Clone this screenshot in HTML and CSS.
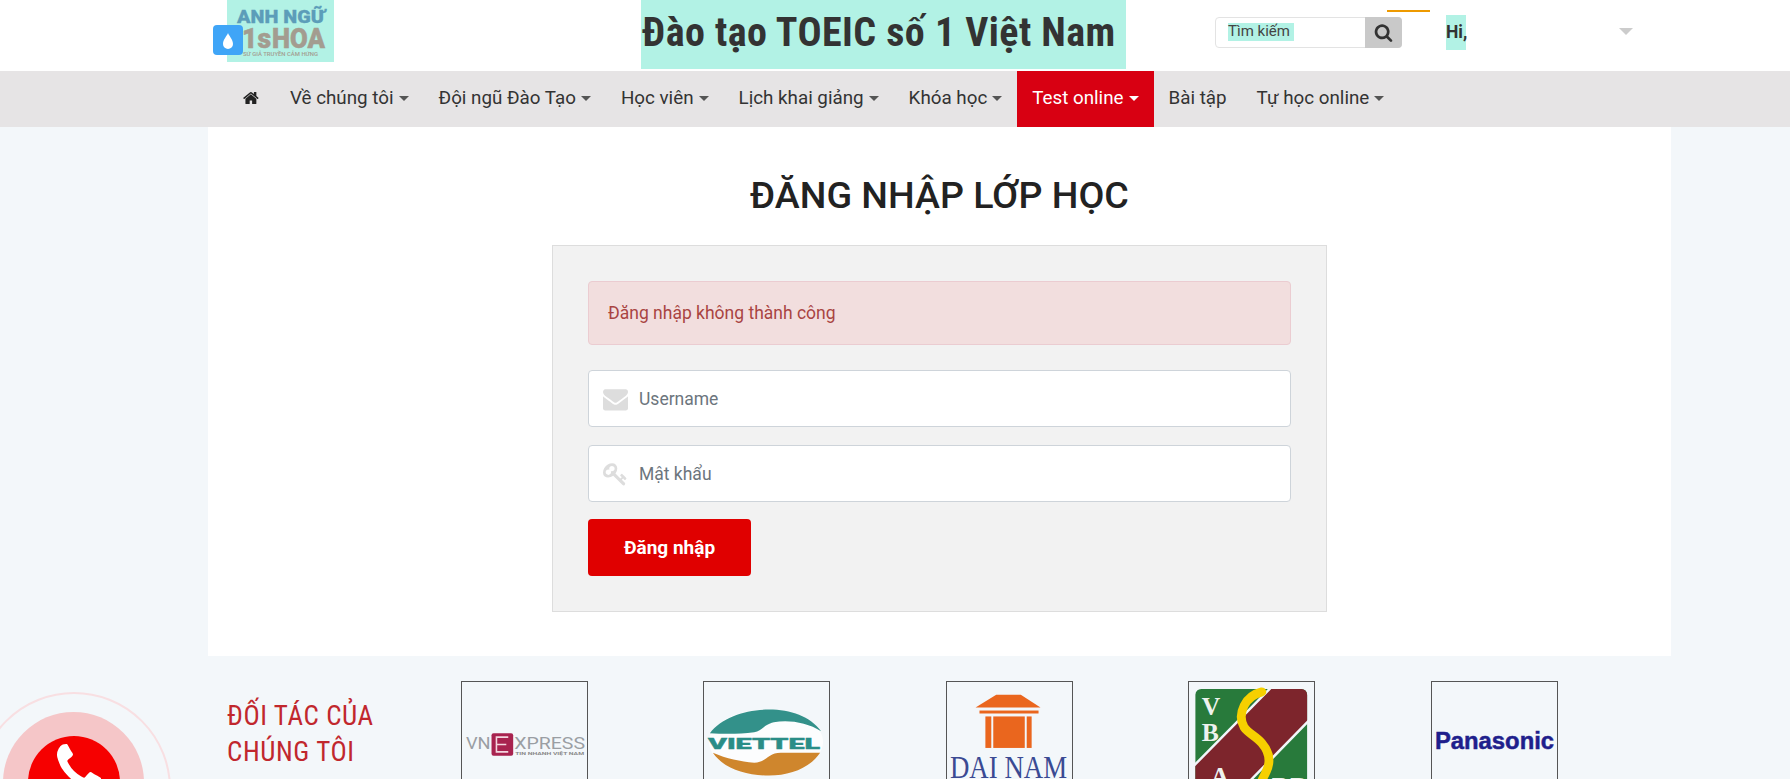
FILE: index.html
```html
<!DOCTYPE html>
<html lang="vi">
<head>
<meta charset="utf-8">
<title>Đăng nhập lớp học</title>
<link rel="stylesheet" href="styles.css">
</head>
<body>
<header class="topbar">
  <a class="logo">
    <svg class="logo-art" viewBox="0 0 107 62" width="107" height="62">
      <text x="10" y="23" class="logo-a" textLength="88" lengthAdjust="spacingAndGlyphs">ANH NGỮ</text>
      <text x="15" y="47.500" class="logo-b" textLength="29" lengthAdjust="spacingAndGlyphs">1s</text>
      <text x="45" y="47.500" class="logo-b" textLength="53" lengthAdjust="spacingAndGlyphs">HOA</text>
      <text x="16" y="56" class="logo-c" textLength="75" lengthAdjust="spacingAndGlyphs">SỨ GIẢ TRUYỀN CẢM HỨNG</text>
    </svg>
    <span class="drop-badge">
      <svg viewBox="0 0 30 30" width="30" height="30"><path d="M15 8c1 3 5 6.500 5 11a5 5 0 0 1-10 0C10 14.500 14 11 15 8z" fill="#fff"/></svg>
    </span>
  </a>
  <div class="slogan">Đào tạo TOEIC số 1 Việt Nam</div>
  <form class="search">
    <span class="search-field"><span class="search-label">Tìm kiếm</span></span>
    <span class="search-btn">
      <svg viewBox="0 0 1792 1792" width="19" height="19"><path fill="#333" d="M1216 832q0-185-131.500-316.500t-316.500-131.500-316.500 131.500-131.500 316.500 131.500 316.500 316.500 131.500 316.500-131.500 131.500-316.500zm512 832q0 52-38 90t-90 38q-54 0-90-38l-343-342q-179 124-399 124-143 0-273.500-55.500t-225-150-150-225-55.500-273.500 55.500-273.500 150-225 225-150 273.500-55.500 273.500 55.500 225 150 150 225 55.500 273.500q0 220-124 399l343 343q37 37 37 90z"/></svg>
    </span>
    <span class="orange-line"></span>
  </form>
  <div class="hi">Hi,</div>
  <span class="user-caret"></span>
</header>

<nav class="menu">
  <a class="item home">
    <svg viewBox="0 0 1792 1792" width="17" height="18"><path fill="#222" d="M1408 992v480q0 26-19 45t-45 19h-384v-384h-256v384h-384q-26 0-45-19t-19-45v-480q0-1 .5-3t.5-3l575-474 575 474q1 2 1 6zm223-69l-62 74q-8 9-21 11h-3q-13 0-21-7l-692-577-692 577q-12 8-24 7-13-2-21-11l-62-74q-8-10-7-23.500t11-21.500l719-599q32-26 76-26t76 26l244 204v-195q0-14 9-23t23-9h192q14 0 23 9t9 23v408l219 182q10 8 11 21.500t-7 23.500z"/></svg>
  </a>
  <a class="item">Về chúng tôi<i class="caret"></i></a>
  <a class="item">Đội ngũ Đào Tạo<i class="caret"></i></a>
  <a class="item">Học viên<i class="caret"></i></a>
  <a class="item">Lịch khai giảng<i class="caret"></i></a>
  <a class="item">Khóa học<i class="caret"></i></a>
  <a class="item active">Test online<i class="caret"></i></a>
  <a class="item">Bài tập</a>
  <a class="item">Tự học online<i class="caret"></i></a>
</nav>

<main class="sheet">
  <h1 class="sheet-title">ĐĂNG NHẬP LỚP HỌC</h1>
  <form class="login">
    <div class="alert">Đăng nhập không thành công</div>
    <div class="field">
      <svg class="field-icon" viewBox="0 0 1792 1792" width="25" height="27" preserveAspectRatio="none"><path fill="#ddd" d="M1792 710v794q0 66-47 113t-113 47h-1472q-66 0-113-47t-47-113v-794q44 49 101 87 362 246 497 345 57 42 92.500 65.500t94.500 48 110 24.500h2q51 0 110-24.500t94.500-48 92.500-65.500q170-123 498-345 57-39 100-87zm0-294q0 79-49 151t-122 123q-376 261-468 325-10 7-42.500 30.500t-54 38-52 32.500-57.500 27-50 9h-2q-23 0-50-9t-57.500-27-52-32.500-54-38-42.500-30.500q-91-64-262-182.500t-205-142.500q-62-42-117-115.500t-55-136.500q0-78 41.500-130t118.500-52h1472q65 0 112.500 47t47.500 113z"/></svg>
      <input class="input" type="text" placeholder="Username">
    </div>
    <div class="field">
      <svg class="field-icon" viewBox="0 0 1792 1792" width="25" height="25"><path fill="#ddd" d="M832 512q0-80-56-136t-136-56-136 56-56 136q0 42 19 83-41-19-83-19-80 0-136 56t-56 136 56 136 136 56 136-56 56-136q0-42-19-83 41 19 83 19 80 0 136-56t56-136zm851 704q0 17-49 66t-66 49q-9 0-28.500-16t-36.500-33-38.500-40-24.500-26l-96 96 220 220q28 28 28 68 0 42-39 81t-81 39q-40 0-68-28l-671-671q-176 131-365 131-163 0-265.500-102.500t-102.500-265.500q0-160 95-313t248-248 313-95q163 0 265.500 102.500t102.500 265.500q0 189-131 365l355 355 96-96q-3-3-26-24.500t-40-38.500-33-36.500-16-28.500q0-17 49-66t66-49q13 0 23 10 6 6 46 44.500t82 79.500 86.500 86 73 78 28.500 41z"/></svg>
      <input class="input" type="password" placeholder="Mật khẩu">
    </div>
    <button class="submit" type="button">Đăng nhập</button>
  </form>
</main>

<section class="partners">
  <h2 class="partners-title">ĐỐI TÁC CỦA<br>CHÚNG TÔI</h2>
  <div class="partner">
    <svg viewBox="0 0 127 127" width="125" height="125">
      <text x="4" y="68" class="vn-text" textLength="25" lengthAdjust="spacingAndGlyphs">VN</text>
      <rect x="30" y="52" width="22" height="23" rx="2" fill="#a8234f"/>
      <path d="M47 56H35v15h12M35 63.500h10" fill="none" stroke="#f3d6df" stroke-width="1.600"/>
      <text x="53" y="68" class="vn-text" textLength="72" lengthAdjust="spacingAndGlyphs">XPRESS</text>
      <text x="54" y="74.500" class="vn-small" textLength="70" lengthAdjust="spacingAndGlyphs">TIN NHANH VIỆT NAM</text>
    </svg>
  </div>
  <div class="partner">
    <svg viewBox="0 0 127 127" width="125" height="125">
      <ellipse cx="63" cy="61" rx="58" ry="33" fill="#fff" opacity=".7"/>
      <path d="M6 52C18 36 42 28 66 28c22 0 42 7 53 22-14-9-34-12-48-9-10 2-12 9-20 10-15 2-30 2-45 1z" fill="#33918a"/>
      <path d="M9 72c14 6 28 9 42 10 12 0 14-10 27-10h40C108 87 88 95 66 95 42 95 20 88 9 72z" fill="#cf862d"/>
      <text x="4" y="68" class="vt-text" textLength="114" lengthAdjust="spacingAndGlyphs">VIETTEL</text>
    </svg>
  </div>
  <div class="partner">
    <svg viewBox="0 0 127 127" width="125" height="125">
      <path d="M29 26L50 13h25l20 13z" fill="#ea661e"/>
      <rect x="33" y="29" width="60" height="3" fill="#ea661e"/>
      <rect x="39" y="35" width="6" height="32" fill="#ea661e"/>
      <rect x="47" y="35" width="32" height="32" fill="#ea661e"/>
      <rect x="81" y="35" width="5" height="32" fill="#ea661e"/>
      <text x="3" y="98" class="dn-text" textLength="119" lengthAdjust="spacingAndGlyphs">DAI NAM</text>
    </svg>
  </div>
  <div class="partner">
    <svg viewBox="0 0 127 127" width="125" height="125">
      <rect x="6.500" y="7" width="113.500" height="118" rx="6" fill="#287a3b"/>
      <path d="M6.500 84L83 7h31a6 6 0 0 1 6 6v27L38 125H6.500z" fill="#7d252c"/>
      <path d="M5 85L83 6M36 127L122 39" stroke="#f3f6fa" stroke-width="2.500"/>
      <path d="M74 10C66 12 60 16 56 24c-4 8-4 15 0 22 4 6 12 9 18 16 6 7 8 14 7 21-1 8-6 13-8 20" fill="none" stroke="#f6d000" stroke-width="9" stroke-linecap="round"/>
      <text x="13" y="34" class="vb-text">V</text>
      <text x="13" y="60" class="vb-text">B</text>
      <text x="22" y="105" class="vb-text">A</text>
      <text x="84" y="115" class="vb-text">RD</text>
    </svg>
  </div>
  <div class="partner">
    <svg viewBox="0 0 127 127" width="125" height="125">
      <text x="3" y="68" class="pa-text" textLength="121" lengthAdjust="spacingAndGlyphs">Panasonic</text>
    </svg>
  </div>
</section>

<div class="call">
  <span class="call-ring"></span>
  <span class="call-halo"></span>
  <span class="call-core">
    <svg viewBox="0 0 1792 1792" width="56" height="56"><path fill="#fff" d="M1600 1240q0 27-10 70.500t-21 68.500q-21 50-122 106-94 51-186 51-27 0-53-3.500t-57.500-12.500-47-14.500-55.500-20.500-49-18q-98-35-175-83-127-79-264-216t-216-264q-48-77-83-175-3-9-18-49t-20.500-55.500-14.500-47-12.500-57.500-3.500-53q0-92 51-186 56-101 106-122 25-11 68.500-21t70.500-10q14 0 21 3 18 6 53 76 11 19 30 54t35 63.500 31 53.500q3 4 17.500 25t21.500 35.500 7 28.500q0 20-28.500 50t-62 55-62 53-28.500 46q0 9 5 22.500t8.500 20.500 14 24 11.500 19q76 137 174 235t235 174q2 1 19 11.500t24 14 20.500 8.500 22.500 5q18 0 46-28.500t53-62 55-62 50-28.500q14 0 28.500 7t35.500 21.500 25 17.500q25 15 53.500 31t63.500 35 54 30q70 35 76 53 3 7 3 21z"/></svg>
  </span>
</div>
</body>
</html>
```

FILE: styles.css
```css
* { box-sizing: border-box; }
html, body { margin: 0; height: 779px; overflow: hidden; }
body { background: #f3f7fa; font-family: Roboto, "Noto Sans", sans-serif; color: #333; position: relative; }

.topbar { height: 71px; background: #fff; display: flex; align-items: flex-start; padding-left: 227px; }
.logo { position: relative; display: block; width: 107px; height: 62px; background: #b2f2e5; flex: none; }
.logo-art { display: block; }
.logo-a { font: 900 19px Roboto, sans-serif; fill: #5c9db9; stroke: #5c9db9; stroke-width: .3px; }
.logo-b { font: 900 28px Roboto, sans-serif; fill: #a39c90; stroke: #a39c90; stroke-width: .5px; }
.logo-c { font: 500 5.500px Roboto, sans-serif; fill: #a39c90; }
.drop-badge { position: absolute; left: -14px; top: 25px; width: 30px; height: 30px; background: #3fa5f7; border-radius: 4px; display: block; }
.drop-badge svg { display: block; }
.slogan { margin-left: 307px; width: 485px; height: 69px; background: #b2f2e5; font-size: 40px; font-weight: 700; font-stretch: condensed; color: #333; line-height: 66px; padding-left: 1px; letter-spacing: .45px; white-space: nowrap; flex: none; }

.search { position: relative; margin-left: 89px; margin-top: 17px; width: 187px; height: 31px; border: 1px solid #e3e3e3; border-radius: 4px; display: flex; flex: none; }
.search-field { flex: 1; padding: 5px 0 0 12px; }
.search-label { display: block; background: #b2f2e5; height: 18px; width: 66px; font-size: 15px; line-height: 16px; color: #444; white-space: nowrap; }
.search-btn { width: 37px; margin: -1px -1px -1px 0; background: #c9c9c9; border-radius: 0 4px 4px 0; display: flex; align-items: center; justify-content: center; }
.orange-line { position: absolute; left: 171px; top: -8px; width: 43px; height: 2px; background: #ee9a00; }
.hi { margin-left: 44px; margin-top: 15px; width: 20px; height: 35px; background: #b2f2e5; font-size: 17.500px; font-weight: 700; line-height: 35px; color: #333; white-space: nowrap; flex: none; }
.user-caret { margin-left: 153px; margin-top: 28px; width: 0; height: 0; border-left: 7px solid transparent; border-right: 7px solid transparent; border-top: 7px solid #ccc; flex: none; }

.menu { height: 56px; background: #e6e4e5; display: flex; padding-left: 228px; }
.item { display: flex; align-items: center; height: 56px; padding: 0 15px 2px; font-size: 18.800px; color: #333; white-space: nowrap; }
.caret { display: inline-block; margin-left: 5px; width: 0; height: 0; border-left: 5px solid transparent; border-right: 5px solid transparent; border-top: 5px solid #555; }
.active { background: #d80012; color: #fff; }
.active .caret { border-top-color: #fff; }

.sheet { margin-left: 208px; width: 1463px; height: 529px; background: #fff; padding-top: 47px; display: flex; flex-direction: column; align-items: center; }
.sheet-title { margin: 0 0 28px; font-size: 37.600px; line-height: 43px; font-weight: 500; color: #222; white-space: nowrap; }
.login { width: 775px; height: 367px; background: #f2f2f2; border: 1px solid #ddd; padding: 35px; display: flex; flex-direction: column; }
.alert { height: 64px; background: #f2dede; border: 1px solid #ebccd1; border-radius: 4px; color: #a94442; font-size: 17.500px; line-height: 62px; padding-left: 19px; margin-bottom: 25px; flex: none; }
.field { position: relative; height: 57px; margin-bottom: 18px; flex: none; }
.field + .field { margin-bottom: 17px; }
.field-icon { position: absolute; left: 15px; top: 50%; transform: translateY(-50%); }
.input { width: 100%; height: 57px; border: 1px solid #ced4da; border-radius: 4px; background: #fff; padding: 0 0 0 50px; font: 17.500px Roboto, sans-serif; color: #495057; outline: none; }
.input::placeholder { color: #6c757d; opacity: 1; }
.submit { width: 163px; height: 57px; flex: none; border: 0; border-radius: 4px; background: #e00000; color: #fff; font: 700 19px Roboto, sans-serif; padding: 0; }

.partners { margin-top: 25px; padding-left: 227px; display: flex; align-items: flex-start; gap: 115.400px; }
.partners-title { margin: 17px -115.400px 0 0; width: 234px; flex: none; font-size: 27px; line-height: 36px; font-weight: 400; font-stretch: condensed; letter-spacing: .6px; white-space: nowrap; color: #c1272d; }
.partner { width: 127px; height: 127px; border: 1px solid #555; flex: none; }
.partner svg { display: block; }
.vn-text { font: 400 16px Roboto, sans-serif; fill: #9a9ea3; }
.vn-small { font: 700 3.500px Roboto, sans-serif; fill: #888; }
.vt-text { font: 900 15.500px Roboto, sans-serif; fill: #2a8d87; stroke: #2a8d87; stroke-width: .4px; }
.dn-text { font: 400 33px "Liberation Serif", serif; fill: #3a4a93; }
.vb-text { font: 700 26px "Liberation Serif", serif; fill: #eef2ee; }
.pa-text { font: 700 24px "Liberation Sans", sans-serif; fill: #1f1f8c; stroke: #1f1f8c; stroke-width: .5px; }

.call { position: absolute; left: 0; top: 0; width: 0; height: 0; }
.call-ring { position: absolute; left: -23px; top: 692px; width: 194px; height: 194px; border-radius: 50%; border: 2px solid #f8dfe2; }
.call-halo { position: absolute; left: 3px; top: 712px; width: 141px; height: 141px; border-radius: 50%; background: #f5c6c8; }
.call-core { position: absolute; left: 28px; top: 736px; width: 92px; height: 92px; border-radius: 50%; background: #f60000; display: block; padding: 4px 0 0 23px; }
.call-core svg { display: block; }
```
